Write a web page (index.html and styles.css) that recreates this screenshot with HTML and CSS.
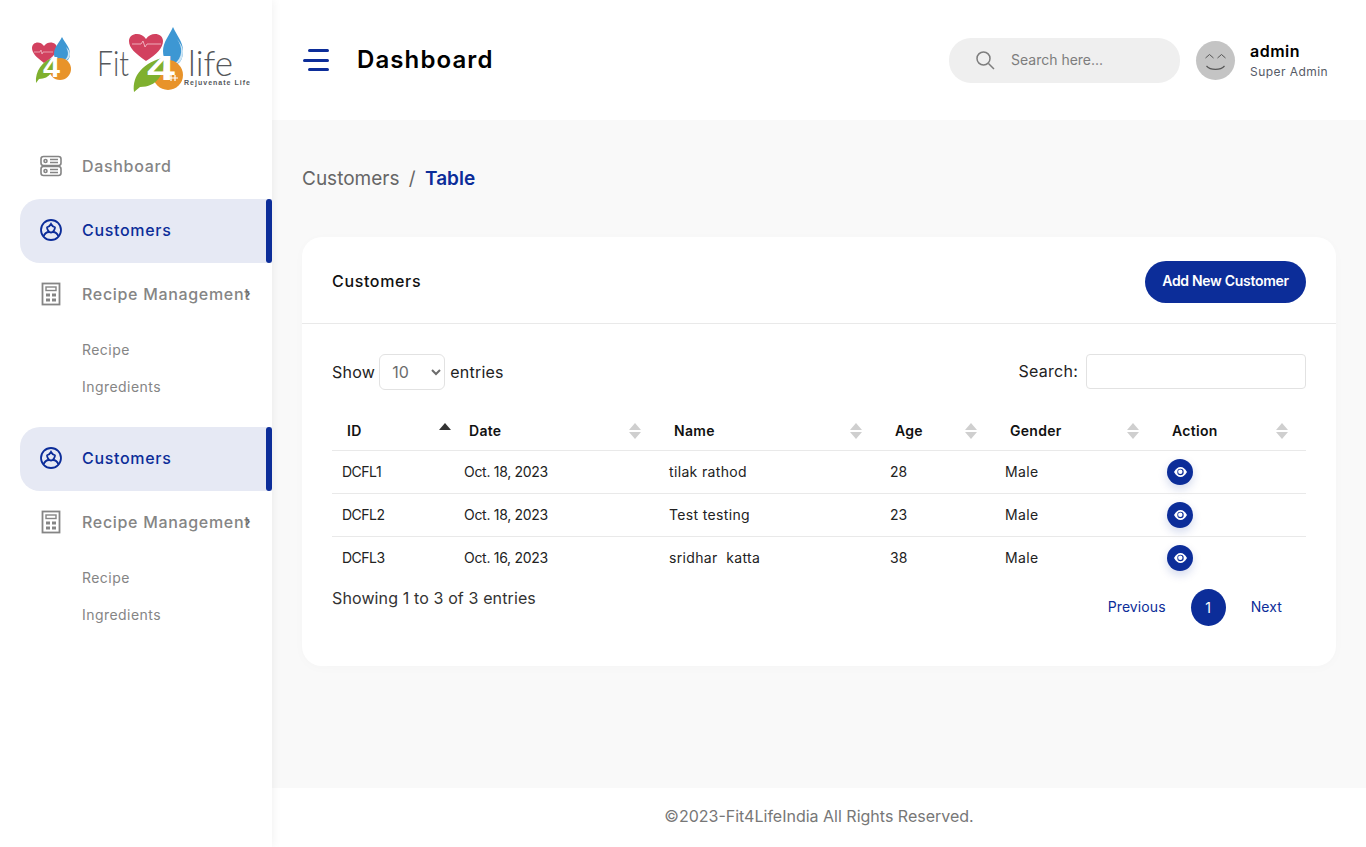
FILE: index.html
```html
<!DOCTYPE html>
<html lang="en">
<head>
    <meta charset="UTF-8">
    <title>Fit4Life - Customers</title>
    <link rel="stylesheet" href="styles.css">
</head>
<body>
<div class="app">
    <aside class="sidebar">
        <div class="logoBox">
            <svg class="logoSmall" width="44" height="50" viewBox="0 0 44 50">
                <path d="M12 26C4 20 0 16 0 11 0 5 8 3 12 9 16 3 25 5 25 11 25 16 20 21 12 26Z" fill="#d2415f"/>
                <path d="M2 15h6l1-2 1 4 1-2h10" fill="none" stroke="#f4c6d0" stroke-width=".7"/>
                <path d="M30 0C27 6 22 10 22 17 22 22 26 25 30 25 35 25 38 22 38 17 38 10 33 6 30 0Z" fill="#3d97d3"/>
                <path d="M34 10C37 15 37 21 31 24 35 24 38 21 38 17 38 14 36 12 34 10Z" fill="#cfe6f5"/>
                <circle cx="28" cy="32" r="11" fill="#e8932a"/>
                <path d="M4 46C3 34 10 24 23 20 23 33 18 42 7 42Z" fill="#7fb02f"/>
                <text x="11" y="40" class="logoFour" font-size="30" textLength="17" lengthAdjust="spacingAndGlyphs">4</text>
            </svg>
            <svg class="logoBig" width="160" height="70" viewBox="0 0 160 70">
                <text x="0" y="51" class="logoWord" font-size="36" textLength="32" lengthAdjust="spacingAndGlyphs">Fit</text>
                <path d="M49 36C38 28 32 23 32 16 32 8 44 6 49 14 54 6 66 8 66 16 66 23 60 29 49 36Z" fill="#d2415f"/>
                <path d="M35 19h9l2-3 2 6 2-3h14" fill="none" stroke="#f4c6d0" stroke-width=".8"/>
                <path d="M76 2C72 11 66 17 66 26 66 35 71 40 76 40 82 40 86 35 86 26 86 17 80 11 76 2Z" fill="#3d97d3"/>
                <path d="M80 14C86 22 86 33 77 39 83 39 86 34 86 26 86 22 83 18 80 14Z" fill="#cfe6f5"/>
                <circle cx="71" cy="50" r="15" fill="#e8932a"/>
                <path d="M37 67C35 50 46 38 68 32 67 50 60 62 43 62Z" fill="#7fb02f"/>
                <path d="M67 53h14M74 50v6M78 50v6" fill="none" stroke="#fff" stroke-width="1.200"/>
                <text x="50" y="55" class="logoFour" font-size="35" textLength="28" lengthAdjust="spacingAndGlyphs">4</text>
                <text x="91" y="51" class="logoWord" font-size="36" textLength="45" lengthAdjust="spacingAndGlyphs">life</text>
                <text x="87" y="60" class="logoTag" font-size="7" textLength="66">Rejuvenate Life</text>
            </svg>
        </div>
        <nav class="nav">
            <a class="navItem">
                <svg class="navIcon" viewBox="0 0 24 24" fill="none" stroke="currentColor" stroke-width="1.600">
                    <rect x="2" y="2.500" width="20" height="9" rx="2.500"/><rect x="2" y="12.500" width="20" height="9" rx="2.500"/>
                    <circle cx="6.500" cy="7" r="1.500"/><circle cx="6.500" cy="17" r="1.500"/>
                    <path d="M11 5.500h8M11 8.500h8M11 15.500h8M11 18.500h8"/>
                </svg>
                <span>Dashboard</span>
            </a>
            <a class="navItem active">
                <svg class="navIcon" viewBox="0 0 24 24" fill="none" stroke="currentColor" stroke-width="1.800">
                    <circle cx="12" cy="12" r="10"/>
                    <path d="M7.500 9.500c2-.5 3.500-1.500 4.500-3.500 1 2 2.500 3 4.500 3.500M8 9c0 3 2 5.500 4 5.500s4-2.500 4-5.500"/>
                    <path d="M4.500 18.500c1-2.500 3.500-4.500 5.500-4.500M19.500 18.500c-1-2.500-3.500-4.500-5.500-4.500"/>
                </svg>
                <span>Customers</span>
            </a>
            <a class="navItem">
                <svg class="navIcon" viewBox="0 0 24 24" fill="none" stroke="currentColor" stroke-width="1.800">
                    <rect x="3.500" y="1.500" width="17" height="21"/>
                    <rect x="7" y="5" width="10" height="3.500" stroke-width="1.400"/>
                    <path d="M7 13h4M13 13h4M7 18h4M13 18h4" stroke-width="3.200"/>
                </svg>
                <span>Recipe Management</span>
                <span class="chev">›</span>
            </a>
            <ul class="subNav">
                <li>Recipe</li>
                <li>Ingredients</li>
            </ul>
            <a class="navItem active">
                <svg class="navIcon" viewBox="0 0 24 24" fill="none" stroke="currentColor" stroke-width="1.800">
                    <circle cx="12" cy="12" r="10"/>
                    <path d="M7.500 9.500c2-.5 3.500-1.500 4.500-3.500 1 2 2.500 3 4.500 3.500M8 9c0 3 2 5.500 4 5.500s4-2.500 4-5.500"/>
                    <path d="M4.500 18.500c1-2.500 3.500-4.500 5.500-4.500M19.500 18.500c-1-2.500-3.500-4.500-5.500-4.500"/>
                </svg>
                <span>Customers</span>
            </a>
            <a class="navItem">
                <svg class="navIcon" viewBox="0 0 24 24" fill="none" stroke="currentColor" stroke-width="1.800">
                    <rect x="3.500" y="1.500" width="17" height="21"/>
                    <rect x="7" y="5" width="10" height="3.500" stroke-width="1.400"/>
                    <path d="M7 13h4M13 13h4M7 18h4M13 18h4" stroke-width="3.200"/>
                </svg>
                <span>Recipe Management</span>
                <span class="chev">›</span>
            </a>
            <ul class="subNav">
                <li>Recipe</li>
                <li>Ingredients</li>
            </ul>
        </nav>
    </aside>
    <div class="main">
        <header class="topBar">
            <div class="burger"><i class="b1"></i><i class="b2"></i><i class="b3"></i></div>
            <h1 class="pageTitle">Dashboard</h1>
            <div class="searchBox">
                <svg width="22" height="22" viewBox="0 0 22 22" fill="none" stroke="#7d7d7d" stroke-width="1.500">
                    <circle cx="9.500" cy="9.500" r="6.500"/><path d="M14.500 14.500l5.500 5.500"/>
                </svg>
                <span>Search here...</span>
            </div>
            <div class="avatar">
                <svg width="39" height="39" viewBox="0 0 39 39" fill="none" stroke="#555" stroke-width="1">
                    <path d="M9.500 17l4-3.500 4 3.500M21.500 17l4-3.500 4 3.500"/>
                    <path d="M10.500 25c4 4.500 14 4.500 18 0" stroke-width="1.200"/>
                </svg>
            </div>
            <div class="userInfo">
                <b>admin</b>
                <span>Super Admin</span>
            </div>
        </header>
        <main class="content">
            <div class="crumb">Customers <em>/</em> <strong>Table</strong></div>
            <section class="card">
                <div class="cardHead">
                    <h2>Customers</h2>
                    <button class="addBtn">Add New Customer</button>
                </div>
                <div class="cardBody">
                    <div class="tableTools">
                        <label class="lenLabel">Show <select class="lenSelect"><option>10</option></select> entries</label>
                        <label class="findLabel"><span class="findText">Search:</span> <input type="text" class="findInput"></label>
                    </div>
                    <table class="dataTable">
                        <colgroup>
                            <col class="c1"><col class="c2"><col class="c3"><col class="c4"><col class="c5"><col class="c6">
                        </colgroup>
                        <thead>
                            <tr>
                                <th class="sorted">ID</th>
                                <th>Date</th>
                                <th>Name</th>
                                <th>Age</th>
                                <th>Gender</th>
                                <th>Action</th>
                            </tr>
                        </thead>
                        <tbody>
                            <tr>
                                <td class="idCell">DCFL1</td><td class="dateCell">Oct. 18, 2023</td><td class="nameCell">tilak rathod</td><td>28</td><td class="nameCell">Male</td>
                                <td><a class="eyeBtn"><svg width="13" height="10" viewBox="0 0 13 10"><path d="M0 5C2 1.500 4 0 6.500 0S11 1.500 13 5C11 8.500 9 10 6.500 10S2 8.500 0 5Z" fill="#fff"/><circle cx="6.500" cy="5" r="3.200" fill="#0c2d99"/><circle cx="6.300" cy="4.800" r="2.200" fill="#fff"/></svg></a></td>
                            </tr>
                            <tr>
                                <td class="idCell">DCFL2</td><td class="dateCell">Oct. 18, 2023</td><td class="nameCell">Test testing</td><td>23</td><td class="nameCell">Male</td>
                                <td><a class="eyeBtn"><svg width="13" height="10" viewBox="0 0 13 10"><path d="M0 5C2 1.500 4 0 6.500 0S11 1.500 13 5C11 8.500 9 10 6.500 10S2 8.500 0 5Z" fill="#fff"/><circle cx="6.500" cy="5" r="3.200" fill="#0c2d99"/><circle cx="6.300" cy="4.800" r="2.200" fill="#fff"/></svg></a></td>
                            </tr>
                            <tr>
                                <td class="idCell">DCFL3</td><td class="dateCell">Oct. 16, 2023</td><td class="nameCell">sridhar&nbsp; katta</td><td>38</td><td class="nameCell">Male</td>
                                <td><a class="eyeBtn"><svg width="13" height="10" viewBox="0 0 13 10"><path d="M0 5C2 1.500 4 0 6.500 0S11 1.500 13 5C11 8.500 9 10 6.500 10S2 8.500 0 5Z" fill="#fff"/><circle cx="6.500" cy="5" r="3.200" fill="#0c2d99"/><circle cx="6.300" cy="4.800" r="2.200" fill="#fff"/></svg></a></td>
                            </tr>
                        </tbody>
                    </table>
                    <div class="tableFoot">
                        <div class="info">Showing 1 to 3 of 3 entries</div>
                        <div class="pager">
                            <a class="pageText">Previous</a>
                            <a class="current">1</a>
                            <a class="pageText">Next</a>
                        </div>
                    </div>
                </div>
            </section>
        </main>
        <footer class="footer">©2023-Fit4LifeIndia All Rights Reserved.</footer>
    </div>
</div>
</body>
</html>
```

FILE: styles.css
```css
*{
    margin:0;
    padding:0;
    box-sizing: border-box;
    list-style: none;
}
body,html{
    height: 100%;
    overflow: hidden;
}
body{
    font-family: Inter, "Open Sans", sans-serif;
    color: #111;
    background: #f9f9f9;
}
.app{
    display: flex;
    height: 847px;
}

/* sidebar */
.sidebar{
    width: 272px;
    flex-shrink: 0;
    background: #fff;
    box-shadow: 0 0 10px rgba(0,0,0,.07);
    position: relative;
    z-index: 2;
}
.logoBox{
    height: 135px;
    padding: 25px 0 0 32px;
    display: flex;
    align-items: flex-start;
    gap: 21px;
}
.logoSmall{
    margin-top: 12px;
    flex-shrink: 0;
}
.logoBig{
    overflow: visible;
    flex-shrink: 0;
}
.logoWord{
    font-family: Lato, sans-serif;
    font-weight: 300;
    fill: #55585c;
}
.logoFour{
    font-family: "Liberation Sans", sans-serif;
    font-weight: 700;
    fill: #fff;
}
.logoTag{
    font-family: "Liberation Sans", sans-serif;
    font-weight: 700;
    fill: #55585c;
}
.navItem{
    height: 64px;
    margin-left: 20px;
    padding: 0 0 2px 19px;
    display: flex;
    align-items: center;
    gap: 19px;
    font-size: 16px;
    font-weight: 500;
    letter-spacing: .68px;
    color: #858585;
    white-space: nowrap;
    position: relative;
    overflow: hidden;
}
.navIcon{
    width: 24px;
    height: 24px;
    flex-shrink: 0;
}
.navItem.active{
    background: #e6e9f4;
    color: #0c2d99;
    border-radius: 20px 0 0 20px;
}
.navItem.active:after{
    content: "";
    position: absolute;
    right: 0;
    top: 0;
    width: 6px;
    height: 100%;
    background: #0c2d99;
    border-radius: 3px;
}
.chev{
    position: absolute;
    left: 225px;
    top: 21px;
    font-size: 14px;
    color: #666;
}
.subNav{
    height: 100px;
    padding: 4px 0 0 82px;
    font-size: 14px;
    letter-spacing: .45px;
    color: #858585;
}
.subNav li{
    height: 37px;
    line-height: 37px;
}

/* top bar */
.main{
    flex: 1;
    display: flex;
    flex-direction: column;
    min-width: 0;
}
.topBar{
    height: 120px;
    flex-shrink: 0;
    background: #fff;
    display: flex;
    align-items: center;
    padding: 0 38px 0 31px;
}
.burger{
    width: 26px;
    height: 22px;
    display: flex;
    flex-direction: column;
    justify-content: space-between;
    align-items: flex-end;
}
.burger i{
    display: block;
    height: 3px;
    border-radius: 2px;
    background: #0c2d99;
}
.b1,.b3{
    width: 21px;
}
.b2{
    width: 26px;
}
.pageTitle{
    margin: 0 0 2px 28px;
    font-size: 24px;
    font-weight: 600;
    letter-spacing: 1.1px;
    color: #000;
    flex: 1;
}
.searchBox{
    width: 231px;
    height: 45px;
    border-radius: 22px;
    background: #efefef;
    display: flex;
    align-items: center;
    padding: 0 0 1px 25px;
    gap: 15px;
    font-size: 14px;
    color: #7d7d7d;
}
.avatar{
    width: 39px;
    height: 39px;
    border-radius: 50%;
    background: #c4c4c4;
    margin-left: 16px;
}
.userInfo{
    margin-left: 15px;
    width: 78px;
    display: flex;
    flex-direction: column;
    gap: 3px;
}
.userInfo b{
    font-size: 16px;
    font-weight: 600;
    letter-spacing: .5px;
    color: #000;
}
.userInfo span{
    font-size: 12px;
    letter-spacing: .45px;
    white-space: nowrap;
    color: #555a66;
}

/* content */
.content{
    flex: 1;
    padding: 0 30px;
}
.crumb{
    height: 117px;
    padding-top: 45px;
    font-size: 19px;
    line-height: 28px;
    color: #666;
}
.crumb em{
    font-style: normal;
    margin: 0 4px;
}
.crumb strong{
    font-weight: 600;
    color: #0c2d99;
}
.card{
    height: 429px;
    background: #fff;
    border-radius: 20px;
    box-shadow: 0 2px 12px rgba(0,0,0,.02);
}
.cardHead{
    height: 87px;
    border-bottom: 1px solid #e9e9e9;
    padding: 2px 30px 0;
    display: flex;
    align-items: center;
    justify-content: space-between;
}
.cardHead h2{
    font-size: 16px;
    font-weight: 500;
    letter-spacing: .65px;
    color: #111;
}
.addBtn{
    width: 161px;
    height: 42px;
    margin-top: 2px;
    padding-bottom: 3px;
    border: 0;
    border-radius: 21px;
    background: #0c2d99;
    color: #fff;
    font-family: inherit;
    font-size: 14px;
    font-weight: 600;
    letter-spacing: -.3px;
}
.cardBody{
    padding: 30px 30px 0;
}
.tableTools{
    display: flex;
    justify-content: space-between;
    align-items: flex-start;
    height: 36px;
    font-size: 16px;
    letter-spacing: .25px;
    color: #222;
}
.lenLabel,
.findLabel{
    display: flex;
    align-items: center;
    gap: 4px;
}
.lenLabel{
    height: 36px;
}
.findLabel{
    height: 35px;
    gap: 8px;
}
.findText{
    padding-bottom: 2px;
}
.lenSelect{
    width: 66px;
    height: 36px;
    margin-right: 1px;
    padding-left: 8px;
    border: 1px solid #e2e2e2;
    border-radius: 6px;
    background: #fff;
    color: #6c6c6c;
    font-family: inherit;
    font-size: 16px;
    outline: none;
}
.findInput{
    width: 220px;
    height: 35px;
    border: 1px solid #e2e2e2;
    border-radius: 4px;
}
.dataTable{
    width: 974px;
    margin-top: 22px;
    table-layout: fixed;
    border-collapse: collapse;
    font-size: 14px;
}
.c1{width:122px}
.c2{width:205px}
.c3{width:221px}
.c4{width:115px}
.c5{width:162px}
.c6{width:149px}
.dataTable th{
    height: 38px;
    padding: 0 15px;
    text-align: left;
    font-weight: 600;
    letter-spacing: .3px;
    color: #111;
    position: relative;
    border-bottom: 1px solid #e9e9e9;
}
/* sort arrows */
.dataTable th:before,
.dataTable th:after{
    content: "";
    position: absolute;
    right: 18px;
    border-left: 6px solid transparent;
    border-right: 6px solid transparent;
}
.dataTable th:before{
    top: 11px;
    border-bottom: 7px solid #cfcfcf;
}
.dataTable th:after{
    top: 20px;
    border-top: 7px solid #cfcfcf;
}
.dataTable th.sorted:before{
    top: 11px;
    right: 3px;
    border-bottom-color: #333;
}
.dataTable th.sorted:after{
    display: none;
}
.dataTable td{
    height: 43px;
    padding: 0 10px;
    color: #222;
    border-bottom: 1px solid #e9e9e9;
}
.dataTable tbody tr:last-child td{
    border-bottom: 0;
}
.dataTable .idCell{
    letter-spacing: -.5px;
}
.dataTable .dateCell{
    letter-spacing: -.3px;
}
.dataTable .nameCell{
    letter-spacing: .35px;
}
.eyeBtn{
    width: 26px;
    height: 26px;
    border-radius: 50%;
    background: #0c2d99;
    display: flex;
    align-items: center;
    justify-content: center;
    box-shadow: 0 4px 10px rgba(12,45,153,.18);
}
.tableFoot{
    display: flex;
    justify-content: space-between;
    align-items: flex-start;
}
.info{
    margin-top: 7px;
    font-size: 16px;
    line-height: 24px;
    letter-spacing: .12px;
    color: #333;
}
.pager{
    display: flex;
    align-items: center;
    margin-top: 10px;
    padding-right: 24px;
    font-size: 14px;
    letter-spacing: .1px;
    color: #0c2d99;
    gap: 25px;
}
.pageText{
    padding-bottom: 2px;
}
.pager .current{
    width: 35px;
    height: 37px;
    border-radius: 50%;
    background: #0c2d99;
    color: #fff;
    display: flex;
    align-items: center;
    justify-content: center;
}
.footer{
    height: 59px;
    flex-shrink: 0;
    background: #fff;
    padding-bottom: 3px;
    display: flex;
    align-items: center;
    justify-content: center;
    font-size: 16px;
    color: #777;
}
```
